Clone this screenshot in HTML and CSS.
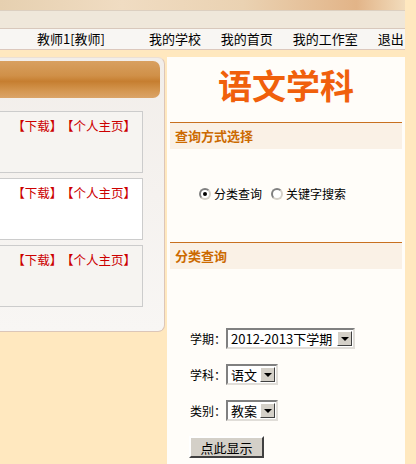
FILE: index.html
```html
<!DOCTYPE html>
<html lang="zh-CN">
<head>
  <meta charset="UTF-8">
  <title>语文学科</title>
  <link rel="stylesheet" href="styles.css">
</head>
<body>
  <div class="page">
    <div class="topband"></div>
    <div class="subbar"></div>
    <div class="nav">
      <span class="user">教师1[教师]</span>
      <a href="#">我的学校</a>
      <a href="#">我的首页</a>
      <a href="#">我的工作室</a>
      <a href="#">退出</a>
    </div>

    <div class="main">
      <div class="left-panel">
        <div class="panel-head"></div>
        <div class="res-list">
          <div class="res-item"><a href="#">【下载】</a><a href="#">【个人主页】</a></div>
          <div class="res-item white"><a href="#">【下载】</a><a href="#">【个人主页】</a></div>
          <div class="res-item"><a href="#">【下载】</a><a href="#">【个人主页】</a></div>
        </div>
      </div>

      <div class="right-panel">
        <h1 class="subject">语文学科</h1>

        <div class="section"><h2>查询方式选择</h2></div>
        <div class="mode-row">
          <label><span class="radio checked"></span>分类查询</label>
          <label><span class="radio"></span>关键字搜索</label>
        </div>

        <div class="section second"><h2>分类查询</h2></div>
        <div class="filter-form">
          <div class="form-row">
            <span class="label">学期：</span>
            <span class="select wide"><span class="value">2012-2013下学期</span><span class="arrow"></span></span>
          </div>
          <div class="form-row">
            <span class="label">学科：</span>
            <span class="select"><span class="value">语文</span><span class="arrow"></span></span>
          </div>
          <div class="form-row">
            <span class="label">类别：</span>
            <span class="select"><span class="value">教案</span><span class="arrow"></span></span>
          </div>
          <button class="show-btn">点此显示</button>
        </div>
      </div>
    </div>
  </div>
</body>
</html>
```

FILE: styles.css
```css
html, body {
  margin: 0;
  padding: 0;
  background-color: #ffe8bf;
  font-family: "Noto Sans CJK SC", "DejaVu Sans", sans-serif;
  font-size: 12px;
  color: #000;
}
.page {
  width: 405px;
  height: 464px;
  overflow: hidden;
}
.topband {
  height: 10px;
  background: linear-gradient(90deg, #e6d0b0 0%, #f0dcc2 30%, #ead2b2 60%, #e2b488 88%, #f2dcbc 100%);
}
.subbar {
  height: 17px;
  background-color: #efe7da;
  border-top: 1px solid #dccfc0;
  border-bottom: 1px solid #d8c8bc;
}
.nav {
  height: 20px;
  line-height: 20px;
  background-color: #f8f6f3;
  border-bottom: 1px solid #dcc8bc;
  padding-left: 37px;
  font-size: 13px;
  white-space: nowrap;
}
.nav .user {
  display: inline-block;
  width: 109px;
}
.nav a {
  color: #000;
  text-decoration: none;
  margin-right: 17px;
}
.main {
  display: flex;
  gap: 2px;
  margin-top: 7px;
  align-items: flex-start;
}
.left-panel {
  width: 164px;
  height: 270px;
  padding-top: 3px;
  background: linear-gradient(#f2eeea, #f8f6f4);
  border-right: 1px solid #dcc6b8;
  border-bottom: 1px solid #dcc6b8;
  border-top: 1px solid #ece0d4;
  border-radius: 0 7px 7px 0;
}
.panel-head {
  width: 160px;
  height: 37px;
  border-radius: 0 7px 7px 0;
  background: linear-gradient(#d8a060 0%, #d09048 40%, #c67e30 55%, #d49650 80%, #dba468 100%);
}
.res-list {
  margin-top: 13px;
  display: flex;
  flex-direction: column;
  gap: 5px;
}
.res-item {
  width: 143px;
  height: 62px;
  box-sizing: border-box;
  border: 1px solid #cccccc;
  border-left: none;
  background-color: #f6f4f1;
  text-align: right;
  padding: 6px 6px 0 0;
  line-height: 16px;
  font-size: 12.5px;
}
.res-item.white {
  background-color: #fff;
}
.res-item a {
  color: #cc0000;
  text-decoration: none;
  margin-left: 5px;
}
.right-panel {
  width: 238px;
  height: 420px;
  padding-top: 8px;
  background-color: #fffdf9;
}
.subject {
  margin: 0;
  text-align: center;
  font-size: 34px;
  line-height: 40px;
  font-weight: bold;
  color: #f0600c;
}
.section {
  margin: 17px 3px 0;
  border-top: 1px solid #c87020;
  background-color: #faf1e6;
}
.section.second {
  margin-top: 38px;
}
.section h2 {
  margin: 0;
  padding-left: 5px;
  height: 26px;
  line-height: 26px;
  font-size: 13px;
  font-weight: bold;
  color: #cc6a00;
}
.mode-row {
  margin-top: 35px;
  padding-left: 32px;
  line-height: 20px;
  display: flex;
  gap: 9px;
}
.mode-row label {
  display: flex;
  align-items: center;
  gap: 3px;
}
.radio {
  display: inline-block;
  width: 8px;
  height: 8px;
  border: 2px solid #808080;
  border-right-color: #d4d0c8;
  border-bottom-color: #d4d0c8;
  border-radius: 50%;
  background-color: #fff;
  position: relative;
}
.radio.checked::after {
  content: "";
  position: absolute;
  left: 2px;
  top: 2px;
  width: 4px;
  height: 4px;
  border-radius: 50%;
  background-color: #000;
}
.filter-form {
  padding: 59px 0 0 23px;
}
.form-row {
  display: flex;
  align-items: center;
  height: 21px;
  margin-bottom: 15px;
}
.label {
  width: 36px;
  font-size: 12px;
}
.select {
  display: inline-flex;
  align-items: center;
  justify-content: space-between;
  box-sizing: border-box;
  width: 52px;
  height: 21px;
  border: 2px solid #808080;
  border-right-color: #e0ddd8;
  border-bottom-color: #e0ddd8;
  background-color: #fff;
  padding: 0 1px 0 3px;
  font-size: 13px;
}
.select.wide {
  width: 129px;
}
.select .value {
  line-height: 17px;
}
.arrow {
  width: 15px;
  height: 15px;
  box-sizing: border-box;
  background-color: #d4d0c8;
  border: 1px solid #fff;
  border-right-color: #404040;
  border-bottom-color: #404040;
  position: relative;
}
.arrow::after {
  content: "";
  position: absolute;
  left: 3px;
  top: 5px;
  border-left: 4px solid transparent;
  border-right: 4px solid transparent;
  border-top: 4px solid #000;
}
.show-btn {
  display: block;
  width: 75px;
  height: 22px;
  margin-left: -1px;
  padding: 0;
  font-family: inherit;
  font-size: 13px;
  background-color: #d4d0c8;
  border: 2px solid #fff;
  border-right-color: #404040;
  border-bottom-color: #404040;
}
```
